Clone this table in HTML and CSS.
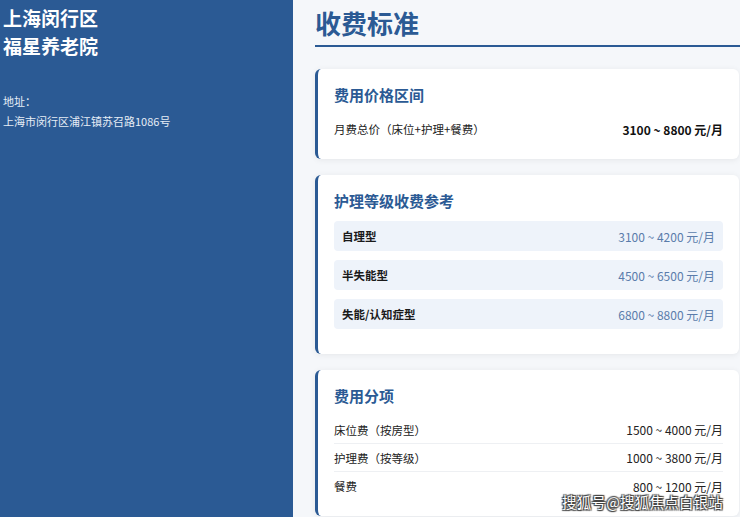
FILE: index.html
```html
<!DOCTYPE html>
<html lang="zh">
<head>
<meta charset="utf-8">
<link rel="stylesheet" href="styles.css">
</head>
<body>
<div class="page">
  <aside class="sidebar">
    <h2 class="name">上海闵行区<br>福星养老院</h2>
    <div class="addr-label">地址：</div>
    <div class="addr">上海市闵行区浦江镇苏召路1086号</div>
  </aside>
  <main class="main">
    <h1 class="heading">收费标准</h1>
    <section class="card">
      <h3 class="card-title">费用价格区间</h3>
      <div class="line"><span class="label">月费总价（床位+护理+餐费）</span><span class="strong">3100 ~ 8800 元/月</span></div>
    </section>
    <section class="card">
      <h3 class="card-title">护理等级收费参考</h3>
      <div class="level"><span class="level-name">自理型</span><span class="level-val">3100 ~ 4200 元/月</span></div>
      <div class="level"><span class="level-name">半失能型</span><span class="level-val">4500 ~ 6500 元/月</span></div>
      <div class="level"><span class="level-name">失能/认知症型</span><span class="level-val">6800 ~ 8800 元/月</span></div>
    </section>
    <section class="card">
      <h3 class="card-title">费用分项</h3>
      <div class="line"><span class="label">床位费（按房型）</span><span>1500 ~ 4000 元/月</span></div>
      <div class="line"><span class="label">护理费（按等级）</span><span>1000 ~ 3800 元/月</span></div>
      <div class="line"><span class="label">餐费</span><span>800 ~ 1200 元/月</span></div>
    </section>
  </main>
  <div class="watermark">搜狐号@搜狐焦点白银站</div>
</div>
</body>
</html>
```

FILE: styles.css
```css
* { box-sizing: border-box; margin: 0; padding: 0; }
html, body { height: 100%; }
body {
  font-family: "Microsoft YaHei", "Noto Sans CJK SC", "Noto Sans", sans-serif;
  background: #f5f7fa;
  overflow: hidden;
}
.page {
  display: flex;
  height: 517px;
  position: relative;
}
.sidebar {
  width: 293px;
  flex: none;
  background: #2b5a94;
  color: #fff;
  padding: 4px 3px;
}
.name {
  font-size: 19px;
  line-height: 28px;
  font-weight: 700;
}
.addr-label, .addr {
  font-size: 11px;
  line-height: 20px;
  color: #e6edf6;
}
.addr-label { margin-top: 31px; }
.main {
  flex: 1;
  padding: 0 1px 0 22px;
}
.heading {
  font-size: 26px;
  line-height: 34px;
  font-weight: 700;
  color: #2b5a94;
  padding-top: 6px;
  padding-bottom: 5px;
  border-bottom: 2px solid #2b5a94;
  margin-right: -1px;
  margin-bottom: 22px;
}
.card {
  background: #fff;
  border-left: 3px solid #2b5a94;
  border-radius: 6px;
  box-shadow: 0 1px 6px rgba(0, 0, 0, 0.07);
  padding: 16px 16px 16px 16px;
  margin-bottom: 16px;
}
.card-title {
  font-size: 15px;
  line-height: 20px;
  font-weight: 700;
  color: #2b5a94;
  margin-bottom: 10px;
}
.line {
  display: flex;
  justify-content: space-between;
  align-items: center;
  height: 28px;
  font-size: 12px;
  color: #222;
  border-bottom: 1px solid #eef0f3;
}
.line:last-child { border-bottom: none; }
.label { font-size: 11.5px; }
.strong { font-weight: 700; color: #111; }
.level {
  display: flex;
  justify-content: space-between;
  align-items: center;
  height: 30px;
  padding: 0 8px;
  background: #eef3fa;
  border-radius: 4px;
  margin-bottom: 9px;
  font-size: 12px;
}
.level-name { font-weight: 700; color: #1a1a1a; font-size: 11.5px; }
.level-val { color: #5a7cab; font-size: 12px; }
.watermark {
  position: absolute;
  right: 17px;
  bottom: 5px;
  font-size: 14.5px;
  line-height: 20px;
  color: #fff;
  letter-spacing: 0.2px;
  text-shadow: 0 0 1px #333, 1px 1px 1px #444, -1px -1px 1px #444, 1px -1px 1px #444, -1px 1px 1px #444;
}
```
